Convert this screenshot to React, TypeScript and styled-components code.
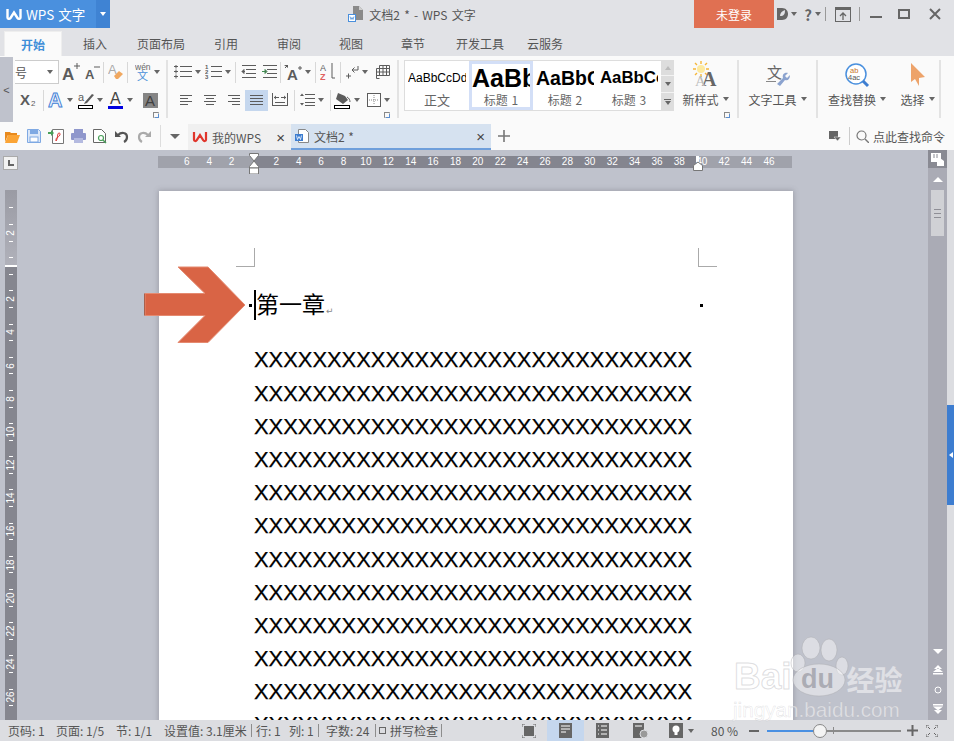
import React from 'react';
import styled, { createGlobalStyle } from 'styled-components';

const SANS = '"Noto Sans CJK SC", "Liberation Sans", sans-serif';
const LATIN = '"Liberation Sans", Arial, sans-serif';

const GlobalStyle = createGlobalStyle`
  html, body { margin: 0; padding: 0; overflow: hidden; }
  body { font-family: ${SANS}; font-size: 12px; color: #555; }
  * { box-sizing: border-box; }
  svg { display: block; flex: none; }
`;

const Shell = styled.div`
  position: relative;
  width: 954px;
  height: 741px;
  display: flex;
  flex-direction: column;
  overflow: hidden;
  background: #e1e2e6;
`;

/* title bar */
const TitleBar = styled.div`
  height: 28px;
  flex: none;
  display: flex;
  background: #e1e2e6;
`;
const Brand = styled.div`
  width: 96px;
  display: flex;
  align-items: center;
  gap: 4px;
  padding-left: 6px;
  background: #4a90de;
  color: #fff;
  font-size: 13.500px;
  word-spacing: 1px;
  white-space: nowrap;
`;
const BrandMenu = styled.div`
  width: 14px;
  display: flex;
  align-items: center;
  justify-content: center;
  background: #3f83d3;
`;
const WhiteCaret = styled.span`
  width: 0;
  height: 0;
  border-left: 3.500px solid transparent;
  border-right: 3.500px solid transparent;
  border-top: 4px solid #fff;
`;
const DocTitle = styled.div`
  flex: 1;
  display: flex;
  align-items: center;
  justify-content: center;
  gap: 6px;
  padding-left: 20px;
  color: #555;
  word-spacing: 1.500px;
`;
const Login = styled.div`
  width: 80px;
  display: flex;
  align-items: center;
  justify-content: center;
  background: #e07052;
  color: #fff;
`;
const WinSlot = styled.div<{ $w: number }>`
  width: ${({ $w }) => $w}px;
  display: flex;
  align-items: center;
  justify-content: center;
  gap: 3px;
  color: #666;
  font-size: 15px;
  font-weight: 700;
`;
const WinRule = styled.div`
  width: 1px;
  height: 14px;
  margin-top: 7px;
  background: #999;
`;

/* menu tabs */
const MenuBar = styled.div`
  height: 28px;
  flex: none;
  display: flex;
  padding-left: 4px;
  background: #e1e2e6;
`;
const MenuTab = styled.div<{ $w: number; $active?: boolean }>`
  width: ${({ $w }) => $w}px;
  display: flex;
  align-items: center;
  justify-content: center;
  color: ${({ $active }) => ($active ? '#3f8fd8' : '#555')};
  font-weight: ${({ $active }) => ($active ? 700 : 400)};
  background: ${({ $active }) => ($active ? '#fafafa' : 'transparent')};
  margin-top: ${({ $active }) => ($active ? '3px' : '0')};
  border: ${({ $active }) => ($active ? '1px solid #eee' : 'none')};
  border-bottom: none;
  padding-top: ${({ $active }) => ($active ? '0' : '3px')};
`;

/* ribbon */
const Ribbon = styled.div`
  height: 66px;
  flex: none;
  display: flex;
  background: #fafafa;
`;
const Collapse = styled.div`
  width: 13px;
  height: 65px;
  margin-top: 1px;
  display: flex;
  align-items: center;
  justify-content: center;
  background: #bfc2cc;
  color: #555;
  font-size: 11px;
  font-family: ${LATIN};
`;
const Group = styled.div<{ $w: number; $pad?: number; $rule?: boolean }>`
  position: relative;
  width: ${({ $w }) => $w}px;
  height: 58px;
  margin-top: 4px;
  padding-left: ${({ $pad }) => $pad ?? 0}px;
  display: flex;
  flex-direction: column;
  gap: 4px;
  border-right: ${({ $rule = true }) => ($rule ? '2px solid #e3e3e3' : 'none')};
`;
const Row = styled.div`
  height: 24px;
  display: flex;
  align-items: center;
`;
const Tool = styled.div<{ $w: number; $on?: boolean }>`
  width: ${({ $w }) => $w}px;
  height: ${({ $on }) => ($on ? '21px' : '24px')};
  display: flex;
  align-items: center;
  justify-content: center;
  gap: 3px;
  background: ${({ $on }) => ($on ? '#c5d7ee' : 'transparent')};
`;
const Rule = styled.div<{ $w: number }>`
  width: ${({ $w }) => $w}px;
  height: 21px;
  display: flex;
  justify-content: center;
  &::before {
    content: '';
    width: 1px;
    height: 100%;
    background: #d8d8d8;
  }
`;
const Caret = styled.span`
  flex: none;
  width: 0;
  height: 0;
  border-left: 3.500px solid transparent;
  border-right: 3.500px solid transparent;
  border-top: 4px solid #666;
`;
const SizeSelect = styled.div`
  width: 44px;
  height: 24px;
  display: flex;
  align-items: center;
  justify-content: space-between;
  padding: 0 5px 0 0;
  background: #fff;
  border: 1px solid #ccc;
  border-left: none;
  color: #555;
  font-size: 12px;
`;
const Launcher = styled.div`
  position: absolute;
  right: 7px;
  bottom: 0;
  width: 6px;
  height: 6px;
  border: 1px solid #888;
  border-right-color: #bbb;
  border-bottom-color: #bbb;
  &::after {
    content: '';
    display: block;
    width: 3px;
    height: 3px;
    margin: 1px 0 0 1px;
    border-right: 1px solid #5b8fd0;
    border-bottom: 1px solid #5b8fd0;
  }
`;
const Gallery = styled.div`
  display: flex;
  height: 51px;
  margin: 4px 0 0 5px;
  background: #fff;
  border: 1px solid #ddd;
  border-right: none;
`;
const StyleCard = styled.div<{ $on?: boolean }>`
  width: 64px;
  height: 49px;
  display: flex;
  flex-direction: column;
  align-items: center;
  border: 3px solid ${({ $on }) => ($on ? '#d3dff7' : 'transparent')};
`;
const Sample = styled.div<{ $size: number; $bold?: boolean }>`
  width: 58px;
  height: 29px;
  overflow: hidden;
  display: flex;
  align-items: center;
  white-space: nowrap;
  color: #000;
  font-family: ${LATIN};
  font-size: ${({ $size }) => $size}px;
  font-weight: ${({ $bold }) => ($bold ? 700 : 400)};
`;
const SampleLabel = styled.div<{ $big?: boolean }>`
  color: #666;
  font-size: ${({ $big }) => ($big ? 13 : 12)}px;
  line-height: 15px;
  word-spacing: 1px;
`;
const GalleryScroll = styled.div`
  width: 13px;
  height: 51px;
  margin-top: 4px;
  display: grid;
  grid-template-rows: 16px 17px 18px;
  background: #ddd;
`;
const ScrollCell = styled.div<{ $dim?: boolean }>`
  display: flex;
  flex-direction: column;
  align-items: center;
  justify-content: center;
  gap: 1px;
  border-bottom: 1px solid #f3f3f3;
  &::before {
    content: '';
    width: 0;
    height: 0;
    border-left: 3.500px solid transparent;
    border-right: 3.500px solid transparent;
    border-top: 4px solid ${({ $dim }) => ($dim ? '#bbb' : '#666')};
  }
`;
const UpCell = styled(ScrollCell)`
  &::before {
    border-top: none;
    border-bottom: 4px solid #bbb;
  }
`;
const BarCell = styled(ScrollCell)`
  border-bottom: none;
  &::after {
    content: '';
    order: -1;
    width: 7px;
    height: 1px;
    background: #666;
  }
`;
const LargeGroup = styled.div<{ $w: number; $rule?: boolean }>`
  position: relative;
  width: ${({ $w }) => $w}px;
  height: 58px;
  margin-top: 4px;
  display: flex;
  border-right: ${({ $rule = true }) => ($rule ? '2px solid #e3e3e3' : 'none')};
`;
const LargeTool = styled.div<{ $w?: number }>`
  width: ${({ $w }) => ($w ? `${$w}px` : '100%')};
  display: flex;
  flex-direction: column;
  align-items: center;
`;
const LargeIcon = styled.div`
  height: 30px;
  display: flex;
  align-items: center;
  justify-content: center;
`;
const LargeLabel = styled.div`
  display: flex;
  align-items: center;
  gap: 4px;
  height: 18px;
  color: #555;
`;

/* quick access + document tabs */
const QuickBar = styled.div`
  height: 28px;
  flex: none;
  display: flex;
  align-items: flex-end;
  padding-left: 1px;
  background: #fafafa;
`;
const QuickTool = styled.div`
  width: 22px;
  height: 28px;
  display: flex;
  align-items: center;
  justify-content: center;
`;
const QuickRule = styled.div`
  width: 1px;
  height: 22px;
  margin: 0 0 3px 5px;
  background: #ddd;
`;
const QuickCaret = styled.div`
  width: 27px;
  height: 28px;
  display: flex;
  align-items: center;
  justify-content: center;
  &::before {
    content: '';
    border-left: 5px solid transparent;
    border-right: 5px solid transparent;
    border-top: 5px solid #666;
  }
`;
const DocTab = styled.div<{ $w: number; $on?: boolean }>`
  width: ${({ $w }) => $w}px;
  height: 26px;
  display: flex;
  align-items: center;
  gap: ${({ $on }) => ($on ? 5 : 4)}px;
  padding: 0 6px 0 4px;
  background: ${({ $on }) => ($on ? '#d6e2f0' : '#f0f0f0')};
  border-bottom: ${({ $on }) => ($on ? '2px solid #6f9fdb' : 'none')};
  color: #555;
  word-spacing: 1px;
`;
const TabClose = styled.span`
  margin-left: auto;
  font-family: ${LATIN};
  font-size: 15px;
  line-height: 1;
  color: #444;
`;
const AddTab = styled.div`
  width: 26px;
  height: 28px;
  display: flex;
  align-items: center;
  justify-content: center;
`;
const CommandBox = styled.div`
  margin-left: auto;
  height: 28px;
  display: flex;
  align-items: center;
  gap: 4px;
  padding-right: 9px;
  color: #555;
`;
const CommandRule = styled.div`
  width: 1px;
  height: 18px;
  margin: 0 2px 0 4px;
  background: #ccc;
`;

/* workspace */
const Workspace = styled.div`
  height: 570px;
  flex: none;
  display: flex;
  overflow: hidden;
  background: #bfc2cc;
`;
const Canvas = styled.div`
  width: 928px;
  display: flex;
  flex-direction: column;
`;
const RulerRow = styled.div`
  height: 40px;
  flex: none;
  display: flex;
  align-items: flex-start;
  padding: 6px 0 0 3px;
`;
const TabStop = styled.div`
  width: 15px;
  height: 14px;
  display: flex;
  align-items: flex-end;
  justify-content: center;
  padding-bottom: 3px;
  background: #f2f2f2;
  border: 1px solid #aaa;
  &::before {
    content: '';
    width: 4px;
    height: 4px;
    border-left: 2px solid #666;
    border-bottom: 2px solid #666;
  }
`;
const HRuler = styled.div`
  position: relative;
  width: 634px;
  height: 12px;
  margin-left: 140px;
  padding-left: 17.600px;
  display: flex;
  background: linear-gradient(90deg, #a0a2ab 96px, #84858f 96px, #84858f 539px, #a0a2ab 539px);
`;
const HTick = styled.span`
  width: 22.400px;
  flex: none;
  text-align: center;
  color: #fff;
  font-family: ${LATIN};
  font-size: 10px;
  line-height: 12px;
`;
const RulerMark = styled.div<{ $x: number }>`
  position: absolute;
  top: -3px;
  left: ${({ $x }) => $x}px;
`;
const SheetRow = styled.div`
  flex: none;
  display: flex;
  padding-left: 5px;
`;
const VRuler = styled.div`
  position: relative;
  width: 12px;
  height: 530px;
  flex: none;
  padding-top: 13.750px;
  display: flex;
  flex-direction: column;
  align-items: center;
  overflow: hidden;
  background: linear-gradient(180deg, #9a9ba4 0, #b0b1ba 75px, #fff 75px, #fff 77px, #85868f 77px);
`;
const VCell = styled.div`
  height: 8.300px;
  flex: none;
  width: 100%;
  display: flex;
  align-items: center;
  justify-content: center;
  color: #fff;
  font-family: ${LATIN};
  font-size: 10px;
`;
const VNum = styled.span`
  transform: rotate(-90deg);
  white-space: nowrap;
  line-height: 8px;
`;
const VDash = styled.span`
  width: 4px;
  height: 1px;
  background: #fff;
`;
const Page = styled.div`
  position: relative;
  width: 634px;
  height: 560px;
  flex: none;
  margin: 1px 0 0 142px;
  background: #fff;
  box-shadow: 0 0 5px 1px rgba(90, 90, 100, 0.3);
  color: #000;
`;
const CropRow = styled.div`
  display: flex;
  justify-content: space-between;
  padding: 57px 76px 0 77px;
`;
const Crop = styled.div<{ $side: 'left' | 'right' }>`
  width: 19px;
  height: 19px;
  border-bottom: 1px solid #aaa;
  ${({ $side }) => ($side === 'left' ? 'border-right' : 'border-left')}: 1px solid #aaa;
`;
const ArrowShape = styled.svg`
  position: absolute;
  left: -15px;
  top: 75px;
`;
const HeadingLine = styled.div`
  height: 76.400px;
  display: flex;
  align-items: center;
  padding-left: 90px;
`;
const ParaDot = styled.span`
  width: 3px;
  height: 3px;
  flex: none;
  background: #000;
`;
const Cursor = styled.span`
  width: 2px;
  height: 30px;
  flex: none;
  margin-left: 2px;
  background: #000;
`;
const Heading = styled.span`
  margin: -4px 0 0 0;
  font-size: 23px;
  line-height: 30px;
  font-weight: 400;
`;
const ReturnMark = styled.span`
  margin: 12px 0 0 1px;
  color: #888;
  font-size: 9px;
  font-family: "DejaVu Sans", sans-serif;
`;
const EndDot = styled(ParaDot)`
  margin-left: auto;
  margin-right: 90px;
`;
const BodyLine = styled.div`
  height: 33.200px;
  padding-left: 95px;
  font-family: ${LATIN};
  font-size: 21.900px;
  line-height: 33.200px;
  white-space: nowrap;
  -webkit-text-stroke: 0.250px #000;
`;
const VScroll = styled.div`
  width: 19px;
  flex: none;
  display: flex;
  flex-direction: column;
  align-items: center;
  background: #aaabb5;
`;
const ScrollTop = styled.div`
  width: 100%;
  height: 18px;
  display: flex;
  align-items: center;
  justify-content: center;
  background: #898a93;
`;
const ScrollArrow = styled.div`
  height: 22px;
  display: flex;
  align-items: center;
  &::before {
    content: '';
    border-left: 5px solid transparent;
    border-right: 5px solid transparent;
    border-bottom: 5px solid #fff;
  }
`;
const Thumb = styled.div`
  width: 13px;
  height: 46px;
  display: flex;
  flex-direction: column;
  align-items: center;
  justify-content: center;
  gap: 3px;
  background: #d0d1d5;
  &::before, &::after, & > i {
    content: '';
    display: block;
    width: 7px;
    height: 1px;
    background: #8f8f96;
  }
`;
const ScrollFoot = styled.div`
  margin-top: auto;
  height: 71px;
  display: flex;
  flex-direction: column;
  align-items: center;
  justify-content: space-between;
  padding-bottom: 6px;
`;
const SideStrip = styled.div`
  width: 7px;
  flex: none;
  display: flex;
  flex-direction: column;
  background: #dcdde1;
`;
const SidePull = styled.div`
  height: 100px;
  margin-top: 255px;
  display: flex;
  align-items: center;
  justify-content: flex-end;
  background: #3d7dd0;
  padding-right: 1px;
  &::before {
    content: '';
    border-top: 3.500px solid transparent;
    border-bottom: 3.500px solid transparent;
    border-right: 4px solid #fff;
  }
`;

/* status bar */
const StatusBar = styled.div`
  height: 21px;
  flex: none;
  display: flex;
  align-items: center;
  padding: 0 14px 0 8px;
  background: #dcdde1;
  color: #555;
  white-space: nowrap;
`;
const StatusItem = styled.span<{ $w?: number; $ml?: number }>`
  width: ${({ $w }) => ($w ? `${$w}px` : 'auto')};
  margin-left: ${({ $ml }) => $ml ?? 0}px;
`;
const StatusRule = styled.span`
  width: 1px;
  height: 13px;
  background: #8d8d8d;
`;
const SpellBox = styled.span`
  width: 7px;
  height: 7px;
  margin: 0 4px 0 3px;
  border: 1px solid #666;
`;
const ViewGroup = styled.div`
  margin-left: auto;
  display: flex;
  align-items: center;
  height: 21px;
`;
const ViewSlot = styled.div<{ $w: number; $on?: boolean }>`
  width: ${({ $w }) => $w}px;
  height: 21px;
  display: flex;
  align-items: center;
  justify-content: center;
  gap: 5px;
  background: ${({ $on }) => ($on ? '#c5d7ee' : 'transparent')};
`;
const ZoomTrack = styled.div`
  position: relative;
  width: 134px;
  height: 2px;
  margin-left: 4px;
  background: #8a8a8a;
`;
const ZoomFill = styled.div`
  width: 53px;
  height: 2px;
  background: #4a90e2;
`;
const ZoomKnob = styled.div`
  position: absolute;
  left: 46px;
  top: -6px;
  width: 14px;
  height: 14px;
  border-radius: 50%;
  background: #f4f4f4;
  border: 1px solid #888;
`;
const ZoomTick = styled.div`
  position: absolute;
  left: 66px;
  top: -3px;
  width: 1px;
  height: 7px;
  background: #8a8a8a;
`;

/* baidu stamp over the corner */
const Stamp = styled.div`
  position: absolute;
  left: 733px;
  top: 636px;
  width: 172px;
  pointer-events: none;
`;
const StampTop = styled.div`
  display: flex;
  align-items: flex-start;
  height: 62px;
`;
const StampBai = styled.span`
  margin: 21px 0 0 1px;
  font-family: ${LATIN};
  font-weight: 700;
  font-size: 37px;
  line-height: 40px;
  color: rgba(255, 255, 255, 0.45);
  -webkit-text-stroke: 1px rgba(170, 170, 175, 0.4);
`;
const StampPaw = styled.svg`
  margin-left: -5px;
`;
const StampCn = styled.span`
  margin: 26px 0 0 -2px;
  font-size: 28px;
  line-height: 34px;
  font-weight: 700;
  white-space: nowrap;
  color: rgba(255, 255, 255, 0.5);
`;
const StampUrl = styled.div`
  font-family: ${LATIN};
  font-size: 20.700px;
  line-height: 24px;
  white-space: nowrap;
  color: rgba(255, 255, 255, 0.5);
  -webkit-text-stroke: 0.500px rgba(170, 170, 175, 0.35);
`;

const INK = '#5c5c5c';

type SvgProps = { w: number; h: number; children: React.ReactNode };
const Ico = ({ w, h, children }: SvgProps) => (
  <svg width={w} height={h} viewBox={`0 0 ${w} ${h}`}>{children}</svg>
);

const Lines = ({ rows, w = 14 }: { rows: [number, number, number][]; w?: number }) => (
  <Ico w={w} h={14}>
    {rows.map(([x, y, len], i) => (
      <rect key={i} x={x} y={y} width={len} height={1} fill={INK} />
    ))}
  </Ico>
);

const WpsMark = ({ color = '#fff', w = 16, h = 13 }: { color?: string; w?: number; h?: number }) => (
  <svg width={w} height={h} viewBox="0 0 16 13">
    <path d="M1.500 1v8.500c0 1.500 2 2 3 .5L8 4.500l3.500 5.500c1 1.500 3 1 3-.5V1" fill="none" stroke={color} strokeWidth="2.400" />
  </svg>
);

const DocBadge = () => (
  <Ico w={15} h={16}>
    <path d="M5 0h6l4 4v10H5z" fill="#8a8a8a" />
    <path d="M11 0l4 4h-4z" fill="#cfcfcf" />
    <rect x="0.500" y="8.500" width="7" height="7" fill="#fff" stroke="#4a8fdc" />
    <path d="M2 10.500l1 3 1-2 1 2 1-3" fill="none" stroke="#4a8fdc" strokeWidth="0.800" />
  </Ico>
);

const LetterA = ({ size, x = 0, y, fill = INK, bold = true }: { size: number; x?: number; y: number; fill?: string; bold?: boolean }) => (
  <text x={x} y={y} fontFamily={LATIN} fontSize={size} fontWeight={bold ? 700 : 400} fill={fill}>A</text>
);

const FontGrow = () => (
  <Ico w={18} h={20}>
    <LetterA size={17} y={18} />
    <path d="M12 4h6M15 1v6" stroke={INK} />
  </Ico>
);
const FontShrink = () => (
  <Ico w={15} h={20}>
    <LetterA size={13} y={17} />
    <path d="M9 5h6" stroke={INK} />
  </Ico>
);
const ClearFormat = () => (
  <Ico w={16} h={18}>
    <LetterA size={13} y={11} fill="#aaa" bold={false} />
    <path d="M6 13l5-5 4 3-5 5h-2z" fill="#f0a860" />
  </Ico>
);
const Wen = () => (
  <Ico w={16} h={18}>
    <text x="0" y="7" fontFamily={LATIN} fontSize="8.500" fill="#666">wén</text>
    <text x="2" y="17" fontFamily={SANS} fontSize="11" fill="#4a8fd8">文</text>
  </Ico>
);
const Subscript = () => (
  <Ico w={17} h={16}>
    <text x="0" y="13" fontFamily={LATIN} fontSize="15" fontWeight="700" fill={INK}>X</text>
    <text x="11" y="14" fontFamily={LATIN} fontSize="8" fill={INK}>2</text>
  </Ico>
);
const OutlineA = () => (
  <Ico w={16} h={17}>
    <text x="0" y="15" fontFamily={LATIN} fontSize="20" fontWeight="700" fill="#eaf1fb" stroke="#3f7fd6" strokeWidth="0.900" textLength="16">A</text>
  </Ico>
);
const Highlight = () => (
  <Ico w={16} h={18}>
    <text x="0" y="10" fontFamily={LATIN} fontSize="11" fill={INK}>a</text>
    <path d="M7 11l7-8 2 1-7 8-3 1z" fill={INK} />
    <rect x="0.500" y="14.500" width="14" height="3" fill="#fff" stroke="#000" />
  </Ico>
);
const FontColor = () => (
  <Ico w={16} h={18}>
    <text x="2" y="13" fontFamily={LATIN} fontSize="16" fill="#444">A</text>
    <rect x="0" y="15" width="15" height="3" fill="#0000e0" />
  </Ico>
);
const ShadedA = () => (
  <Ico w={15} h={15}>
    <rect width="15" height="15" fill="#858585" />
    <text x="2" y="13" fontFamily={LATIN} fontSize="15" fill="#3f3f3f">A</text>
  </Ico>
);
const Bullets = () => (
  <Ico w={18} h={14}>
    {[1, 6, 11].map(y => (
      <g key={y}>
        <path d={`M0 ${y + 0.500}h4M2 ${y - 1.500}v4`} stroke={INK} />
        <rect x="6" y={y} width="12" height="1" fill={INK} />
      </g>
    ))}
  </Ico>
);
const Numbers = () => (
  <Ico w={17} h={16}>
    {[1, 6, 11].map((y, i) => (
      <g key={y}>
        <text x="0" y={y + 4} fontFamily={LATIN} fontSize="6" fontWeight="700" fill={INK}>{i + 1}</text>
        <rect x="6" y={y + 1} width="11" height="1" fill={INK} />
      </g>
    ))}
  </Ico>
);
const Indent = ({ flip }: { flip?: boolean }) => (
  <Ico w={15} h={14}>
    <path d="M1 0.500h14M5 4.500h10M5 8.500h10M1 12.500h14" stroke={INK} fill="none" />
    <path d={flip ? 'M0 6.500h3M3 4.500v4l2-2z' : 'M1 6.500h3M3 4.500v4l-2-2z'} stroke={flip ? '#3f8f50' : INK} fill={INK} />
  </Ico>
);
const SpacingA = () => (
  <Ico w={18} h={17}>
    <text x="3" y="16" fontFamily={LATIN} fontSize="15" fontWeight="700" fill={INK}>A</text>
    <path d="M1 4l3-3M14 4h4M16 2v4" stroke={INK} fill="none" />
    <path d="M0 1h4v3z" fill={INK} />
  </Ico>
);
const SortAz = () => (
  <Ico w={16} h={18}>
    <text x="0" y="8" fontFamily={LATIN} fontSize="9" fill={INK}>A</text>
    <text x="0" y="17" fontFamily={LATIN} fontSize="9" fontWeight="700" fill="#e06060">Z</text>
    <path d="M12 0v15" stroke={INK} />
    <path d="M12 15h3" stroke={INK} />
  </Ico>
);
const ReturnTool = () => (
  <Ico w={13} h={15}>
    <path d="M12 1v4H6M6 5l2.500-2.500M6 5l2.500 2.500" stroke={INK} fill="none" />
    <path d="M0 11h5M2.500 8.500v5" stroke={INK} />
  </Ico>
);
const TableGrid = () => (
  <Ico w={14} h={14}>
    <path d="M3.500 0.500h10v10M0.500 3.500h13M0.500 7h13M3.500 0.500v10M7 0.500v10M10.500 0.500v10M0.500 10.500h13M0.500 3.500v10h3" fill="none" stroke={INK} />
  </Ico>
);
const Distributed = () => (
  <Ico w={16} h={14}>
    <path d="M0.500 0v13M15.500 0v13M0 12.500h16M3 9.500h10" stroke={INK} fill="none" />
    <path d="M2 4.500h5M9 4.500h5" stroke={INK} />
    <path d="M2 4.500l2-2v4zM14 4.500l-2-2v4z" fill={INK} />
  </Ico>
);
const LineSpace = () => (
  <Ico w={15} h={14}>
    <path d="M5 1.500h10M5 5.500h10M5 9.500h10M5 12.500h10" stroke={INK} />
    <path d="M0 3h4L2 0.500zM0 10h4l-2 2.500z" fill={INK} />
  </Ico>
);
const Bucket = () => (
  <Ico w={17} h={18}>
    <path d="M4 2l7 3 3 4-5 4-7-5z" fill={INK} />
    <path d="M13 6c2 1 3 3 3 5" stroke={INK} fill="none" />
    <rect x="0.500" y="14.500" width="15" height="3" fill="#fff" stroke="#000" />
  </Ico>
);
const BorderBox = () => (
  <Ico w={14} h={14}>
    <rect x="0.500" y="0.500" width="13" height="13" fill="#fff" stroke={INK} />
    <path d="M7 2v10M2 7h10" stroke="#888" strokeDasharray="1 1" />
  </Ico>
);
const NewStyle = () => (
  <Ico w={26} h={28}>
    <circle cx="8" cy="8" r="4" fill="#fdeaa0" />
    <path d="M8 0v3M8 13v3M0 8h3M13 8h3M2 2l2 2M12 12l2 2M14 2l-2 2M2 14l2-2" stroke="#f5b73a" strokeWidth="1.400" />
    <text x="9" y="25" fontFamily='"Liberation Serif", serif' fontSize="20" fontWeight="700" fill="#666">A</text>
    <text x="2" y="25" fontFamily='"Liberation Serif", serif' fontSize="15" fill="#bbb">A</text>
  </Ico>
);
const TextTools = () => (
  <Ico w={24} h={24}>
    <text x="1" y="15" fontFamily={SANS} fontSize="15" fill="#666">文</text>
    <path d="M0 18.500h10" stroke="#888" />
    <path d="M11 21l6-6c-1-3 1-6 5-5l-3 3 2 2 3-3c0 4-2 6-5 5l-5 6z" fill="#8ba3cf" />
  </Ico>
);
const FindReplace = () => (
  <Ico w={25} h={25}>
    <circle cx="11" cy="11" r="10" fill="#fff" stroke="#4a90de" strokeWidth="1.500" />
    <text x="5" y="10" fontFamily={LATIN} fontSize="7.500" fill="#c8752a">ab</text>
    <text x="3" y="17" fontFamily={LATIN} fontSize="7.500" fill="#555">4ac</text>
    <path d="M18 18l5 5" stroke="#3d7dd0" strokeWidth="3" />
  </Ico>
);
const Pointer = () => (
  <Ico w={15} h={24}>
    <path d="M1 0l14 14-6 1 0 8-4-7-4 3z" fill="#eda36a" />
  </Ico>
);
const Folder = () => (
  <Ico w={15} h={13}>
    <path d="M0 2h5l1 1h6v2H3L0 12z" fill="#e8891c" />
    <path d="M3 5h12l-3 8H0z" fill="#fba435" />
  </Ico>
);
const Floppy = () => (
  <Ico w={14} h={14}>
    <path d="M0.500 0.500h11l2 2v11h-13z" fill="#dbe7f8" stroke="#7fa9e3" />
    <rect x="3" y="1" width="8" height="4" fill="#7fa9e3" />
    <rect x="3" y="8" width="8" height="5" fill="#fff" stroke="#7fa9e3" />
  </Ico>
);
const ExportPdf = () => (
  <Ico w={16} h={15}>
    <path d="M4.500 0.500h11v14h-11z" fill="#fff" stroke="#777" />
    <path d="M8 12c2-2 1-8 3-8s1 3-1 4-2 2-2 4z" fill="none" stroke="#d33" />
    <path d="M0 3h3V1l3 3-3 3V5H0z" fill="#4aa05a" />
  </Ico>
);
const Printer = () => (
  <Ico w={15} h={14}>
    <rect x="3" y="0" width="9" height="4" fill="#8f97cc" />
    <rect x="0" y="4" width="15" height="7" rx="1" fill="#8f97cc" />
    <rect x="3" y="9" width="9" height="5" fill="#b4bae0" />
  </Ico>
);
const Preview = () => (
  <Ico w={14} h={15}>
    <path d="M0.500 0.500h8l4 4v9h-12z" fill="#fff" stroke="#666" />
    <circle cx="8" cy="9" r="2.500" fill="none" stroke="#4aa05a" strokeWidth="1.200" />
    <path d="M10 11l3 3" stroke="#4aa05a" strokeWidth="1.500" />
  </Ico>
);
const Undo = () => (
  <Ico w={14} h={14}>
    <path d="M3 6c3-3 9-3 9 2 0 2-1 4-3 5" fill="none" stroke="#555" strokeWidth="2.200" />
    <path d="M0 2l6 6H0z" fill="#555" />
  </Ico>
);
const Redo = () => (
  <Ico w={14} h={14}>
    <path d="M11 6c-3-3-9-3-9 2 0 2 1 4 3 5" fill="none" stroke="#aaa" strokeWidth="2.200" />
    <path d="M14 2l-6 6h6z" fill="#aaa" />
  </Ico>
);
const DocTabIcon = () => (
  <Ico w={14} h={14}>
    <path d="M3.500 0.500h7l3 3v10h-10z" fill="#fff" stroke="#888" />
    <rect x="0" y="5" width="8" height="7" fill="#3d7dd0" />
    <path d="M1.500 6.500l1 4 1.500-3 1.500 3 1-4" fill="none" stroke="#fff" strokeWidth="0.800" />
  </Ico>
);
const Plus = () => (
  <Ico w={12} h={12}>
    <path d="M0 6h12M6 0v12" stroke="#777" strokeWidth="1.600" />
  </Ico>
);
const FilterTag = () => (
  <Ico w={12} h={11}>
    <rect width="9" height="8" fill="#666" />
    <path d="M5 6h7l-3.500 4z" fill="#666" stroke="#fafafa" strokeWidth="0.500" />
  </Ico>
);
const Lens = () => (
  <Ico w={13} h={13}>
    <circle cx="5.500" cy="5.500" r="4.500" fill="none" stroke="#777" strokeWidth="1.200" />
    <path d="M9 9l4 4" stroke="#777" strokeWidth="1.400" />
  </Ico>
);
const LeafD = () => (
  <Ico w={11} h={12}>
    <path d="M0 0h5c8 0 8 12 0 12H0z" fill="#666" />
    <path d="M3 8c0-3 2-5 5-6 0 4-1 6-5 6z" fill="#e1e2e6" />
  </Ico>
);
const UploadBox = () => (
  <Ico w={16} h={15}>
    <rect x="0.500" y="0.500" width="15" height="14" fill="none" stroke="#666" />
    <rect x="0" y="0" width="16" height="3" fill="#666" />
    <path d="M8 13V6M5 9l3-3 3 3" fill="none" stroke="#666" strokeWidth="1.300" />
  </Ico>
);
const WinMin = () => (
  <Ico w={12} h={12}>
    <rect y="8" width="12" height="2" fill="#666" />
  </Ico>
);
const WinMax = () => (
  <Ico w={12} h={10}>
    <rect x="1" y="1" width="10" height="8" fill="none" stroke="#666" strokeWidth="2" />
  </Ico>
);
const WinClose = () => (
  <Ico w={12} h={12}>
    <path d="M1 1l10 10M11 1L1 11" stroke="#666" strokeWidth="2" />
  </Ico>
);
const RevisionMark = () => (
  <Ico w={14} h={13}>
    <rect x="0" y="0" width="10" height="9" fill="#fff" />
    <path d="M3 1v4M6 1v4" stroke="#898a93" />
    <path d="M6 13V8l3-3 4 3v5z" fill="#fff" />
  </Ico>
);
const Frame = () => (
  <Ico w={14} h={14}>
    <rect x="2" y="2" width="10" height="10" fill="#666" />
    <path d="M0 3V0h3M11 0h3v3M14 11v3h-3M3 14H0v-3" fill="none" stroke="#666" />
  </Ico>
);
const PageView = () => (
  <Ico w={13} h={15}>
    <rect width="13" height="15" fill="#666" />
    <path d="M2 3h9M2 6h9M2 9h5" stroke="#fff" />
  </Ico>
);
const OutlineView = () => (
  <Ico w={13} h={15}>
    <rect width="13" height="15" fill="#666" />
    <path d="M2 3h1M5 3h6M2 7h1M5 7h6M2 11h1M5 11h6" stroke="#fff" />
  </Ico>
);
const WebView = () => (
  <Ico w={15} h={15}>
    <rect width="11" height="15" fill="#666" />
    <path d="M2 3h7" stroke="#fff" />
    <circle cx="11" cy="11" r="4" fill="#999" stroke="#dcdde1" />
  </Ico>
);
const BulbView = () => (
  <Ico w={14} h={15}>
    <rect width="14" height="15" fill="#666" />
    <circle cx="7" cy="6" r="3.500" fill="#fff" />
    <rect x="5.500" y="9" width="3" height="3" fill="#fff" />
  </Ico>
);
const Expand = () => (
  <Ico w={12} h={12}>
    <path d="M0 3V0h3M9 0h3v3M12 9v3H9M3 12H0V9" fill="none" stroke="#666" />
    <path d="M4 4L2 2M8 4l2-2M8 8l2 2M4 8l-2 2" stroke="#666" />
  </Ico>
);
const StepUp = () => (
  <Ico w={10} h={10}>
    <path d="M1 4l4-4 4 4zM0 7h10l-5-4z" fill="#fff" />
    <rect y="8" width="10" height="1.500" fill="#fff" />
  </Ico>
);
const StepDown = () => (
  <Ico w={10} h={10}>
    <rect y="0" width="10" height="1.500" fill="#fff" />
    <path d="M0 2.500h10l-5 4zM1 6l4 4 4-4z" fill="#fff" />
  </Ico>
);
const Dot = () => (
  <Ico w={8} h={8}>
    <circle cx="4" cy="4" r="3" fill="none" stroke="#fff" />
  </Ico>
);
const DownFilled = () => (
  <Ico w={10} h={6}>
    <path d="M0 0h10L5 5z" fill="#fff" />
  </Ico>
);

const H_NUMBERS = [6, 4, 2, null, 2, 4, 6, 8, 10, 12, 14, 16, 18, 20, 22, 24, 26, 28, 30, 32, 34, 36, 38, 40, 42, 44, 46];
const V_CELLS = Array.from({ length: 62 }, (_, i) => i - 7);
const BODY_LINES = Array.from({ length: 12 }, (_, i) => i);
const MENU: [string, number][] = [
  ['插入', 66], ['页面布局', 66], ['引用', 64], ['审阅', 62], ['视图', 62], ['章节', 62], ['开发工具', 72], ['云服务', 58],
];
const STYLES = [
  { label: '标题 1', size: 25, on: true },
  { label: '标题 2', size: 19.500 },
  { label: '标题 3', size: 16.800 },
];

const App: React.FC = () => {
  return (
    <Shell>
      <GlobalStyle />
      <TitleBar>
        <Brand>
          <WpsMark />
          WPS 文字
        </Brand>
        <BrandMenu><WhiteCaret /></BrandMenu>
        <DocTitle>
          <DocBadge />
          文档2 * - WPS 文字
        </DocTitle>
        <Login>未登录</Login>
        <WinSlot $w={26}><LeafD /><Caret /></WinSlot>
        <WinSlot $w={25}>?<Caret /></WinSlot>
        <WinRule />
        <WinSlot $w={33}><UploadBox /></WinSlot>
        <WinRule />
        <WinSlot $w={32}><WinMin /></WinSlot>
        <WinSlot $w={24}><WinMax /></WinSlot>
        <WinSlot $w={38}><WinClose /></WinSlot>
      </TitleBar>

      <MenuBar>
        <MenuTab $w={58} $active>开始</MenuTab>
        {MENU.map(([name, w]) => (
          <MenuTab key={name} $w={w}>{name}</MenuTab>
        ))}
      </MenuBar>

      <Ribbon>
        <Collapse>&lt;</Collapse>
        <Group $w={155} $pad={2}>
          <Row>
            <SizeSelect>号<Caret /></SizeSelect>
            <Tool $w={24}><FontGrow /></Tool>
            <Tool $w={19}><FontShrink /></Tool>
            <Rule $w={3} />
            <Tool $w={21}><ClearFormat /></Tool>
            <Rule $w={3} />
            <Tool $w={36}><Wen /><Caret /></Tool>
          </Row>
          <Row>
            <Tool $w={26}><Subscript /></Tool>
            <Rule $w={5} />
            <Tool $w={29}><OutlineA /><Caret /></Tool>
            <Tool $w={30}><Highlight /><Caret /></Tool>
            <Tool $w={30}><FontColor /><Caret /></Tool>
            <Tool $w={30}><ShadedA /></Tool>
          </Row>
          <Launcher />
        </Group>
        <Group $w={231} $pad={5}>
          <Row>
            <Tool $w={29}><Bullets /><Caret /></Tool>
            <Tool $w={32}><Numbers /><Caret /></Tool>
            <Rule $w={3} />
            <Tool $w={22}><Indent /></Tool>
            <Tool $w={20}><Indent flip /></Tool>
            <Rule $w={3} />
            <Tool $w={31}><SpacingA /><Caret /></Tool>
            <Rule $w={4} />
            <Tool $w={22}><SortAz /></Tool>
            <Rule $w={3} />
            <Tool $w={30}><ReturnTool /><Caret /></Tool>
            <Tool $w={22}><TableGrid /></Tool>
          </Row>
          <Row>
            <Tool $w={25}><Lines rows={[[1, 2, 12], [1, 5, 8], [1, 8, 12], [1, 11, 8]]} /></Tool>
            <Tool $w={24}><Lines rows={[[1, 2, 12], [3, 5, 8], [1, 8, 12], [3, 11, 8]]} /></Tool>
            <Tool $w={23}><Lines rows={[[1, 2, 12], [5, 5, 8], [1, 8, 12], [5, 11, 8]]} /></Tool>
            <Tool $w={23} $on><Lines rows={[[1, 2, 13], [1, 5, 13], [1, 8, 13], [1, 11, 13]]} w={15} /></Tool>
            <Tool $w={24}><Distributed /></Tool>
            <Rule $w={4} />
            <Tool $w={32}><LineSpace /><Caret /></Tool>
            <Rule $w={4} />
            <Tool $w={30}><Bucket /><Caret /></Tool>
            <Tool $w={32}><BorderBox /><Caret /></Tool>
          </Row>
          <Launcher />
        </Group>
        <Gallery>
          <StyleCard>
            <Sample $size={12}>AaBbCcDd</Sample>
            <SampleLabel $big>正文</SampleLabel>
          </StyleCard>
          {STYLES.map(item => (
            <StyleCard key={item.label} $on={item.on}>
              <Sample $size={item.size} $bold>AaBbCcDd</Sample>
              <SampleLabel>{item.label}</SampleLabel>
            </StyleCard>
          ))}
        </Gallery>
        <GalleryScroll>
          <UpCell />
          <ScrollCell />
          <BarCell />
        </GalleryScroll>
        <LargeGroup $w={65}>
          <LargeTool>
            <LargeIcon><NewStyle /></LargeIcon>
            <LargeLabel>新样式<Caret /></LargeLabel>
          </LargeTool>
          <Launcher />
        </LargeGroup>
        <LargeGroup $w={79}>
          <LargeTool>
            <LargeIcon><TextTools /></LargeIcon>
            <LargeLabel>文字工具<Caret /></LargeLabel>
          </LargeTool>
        </LargeGroup>
        <LargeGroup $w={123}>
          <LargeTool $w={78}>
            <LargeIcon><FindReplace /></LargeIcon>
            <LargeLabel>查找替换<Caret /></LargeLabel>
          </LargeTool>
          <LargeTool $w={43}>
            <LargeIcon><Pointer /></LargeIcon>
            <LargeLabel>选择<Caret /></LargeLabel>
          </LargeTool>
        </LargeGroup>
      </Ribbon>

      <QuickBar>
        <QuickTool><Folder /></QuickTool>
        <QuickTool><Floppy /></QuickTool>
        <QuickTool><ExportPdf /></QuickTool>
        <QuickTool><Printer /></QuickTool>
        <QuickTool><Preview /></QuickTool>
        <QuickTool><Undo /></QuickTool>
        <QuickTool><Redo /></QuickTool>
        <QuickRule />
        <QuickCaret />
        <DocTab $w={103}>
          <WpsMark color="#e0352b" w={16} h={12} />
          我的WPS
          <TabClose>×</TabClose>
        </DocTab>
        <DocTab $w={200} $on>
          <DocTabIcon />
          文档2 *
          <TabClose>×</TabClose>
        </DocTab>
        <AddTab><Plus /></AddTab>
        <CommandBox>
          <FilterTag />
          <CommandRule />
          <Lens />
          点此查找命令
        </CommandBox>
      </QuickBar>

      <Workspace>
        <Canvas>
          <RulerRow>
            <TabStop />
            <HRuler>
              {H_NUMBERS.map((n, i) => (
                <HTick key={i}>{n}</HTick>
              ))}
              <RulerMark $x={91}>
                <svg width="10" height="21" viewBox="0 0 10 21">
                  <path d="M0.500 0.500h9v2L5 8l4.500 5.500v1.500h-9v-1.500L5 8 0.500 2.500z" fill="#fff" stroke="#777" />
                  <rect x="0.500" y="15" width="9" height="6" fill="#fff" stroke="#777" />
                </svg>
              </RulerMark>
              <RulerMark $x={535}>
                <svg width="10" height="18" viewBox="0 0 10 18">
                  <rect x="3" y="3" width="3" height="6" fill="#fff" />
                  <path d="M0.500 17.500v-5L5 9l4.500 3.500v5z" fill="#fff" stroke="#777" />
                </svg>
              </RulerMark>
            </HRuler>
          </RulerRow>
          <SheetRow>
            <VRuler>
              {V_CELLS.map(i => (
                <VCell key={i}>
                  {i !== 0 && i % 4 === 0 ? (
                    <VNum>{Math.abs(i / 2)}</VNum>
                  ) : i % 2 !== 0 ? (
                    <VDash />
                  ) : null}
                </VCell>
              ))}
            </VRuler>
            <Page>
              <CropRow>
                <Crop $side="left" />
                <Crop $side="right" />
              </CropRow>
              <ArrowShape width="102" height="78" viewBox="0 0 102 78">
                <path
                  d="M1 27.500h60L34 1h30l37 38-37 37.500H34L61 49.500H1z"
                  fill="#d96445"
                  stroke="#e58a70"
                />
                <path d="M0.500 27.500v22" stroke="#a9604c" />
              </ArrowShape>
              <HeadingLine>
                <ParaDot />
                <Cursor />
                <Heading>第一章</Heading>
                <ReturnMark>↵</ReturnMark>
                <EndDot />
              </HeadingLine>
              {BODY_LINES.map(i => (
                <BodyLine key={i}>XXXXXXXXXXXXXXXXXXXXXXXXXXXXXX</BodyLine>
              ))}
            </Page>
          </SheetRow>
        </Canvas>
        <VScroll>
          <ScrollTop><RevisionMark /></ScrollTop>
          <ScrollArrow />
          <Thumb><i /></Thumb>
          <ScrollFoot>
            <DownFilled />
            <StepUp />
            <Dot />
            <StepDown />
          </ScrollFoot>
        </VScroll>
        <SideStrip>
          <SidePull />
        </SideStrip>
      </Workspace>

      <StatusBar>
        <StatusItem $w={48}>页码: 1</StatusItem>
        <StatusItem $w={60}>页面: 1/5</StatusItem>
        <StatusItem $w={48}>节: 1/1</StatusItem>
        <StatusItem $w={87}>设置值: 3.1厘米</StatusItem>
        <StatusRule />
        <StatusItem $w={33} $ml={4}>行: 1</StatusItem>
        <StatusItem $w={29}>列: 1</StatusItem>
        <StatusRule />
        <StatusItem $w={49} $ml={7}>字数: 24</StatusItem>
        <StatusRule />
        <SpellBox />
        <StatusItem $w={51}>拼写检查</StatusItem>
        <StatusRule />
        <ViewGroup>
          <ViewSlot $w={37}><Frame /></ViewSlot>
          <ViewSlot $w={37} $on><PageView /></ViewSlot>
          <ViewSlot $w={37}><OutlineView /></ViewSlot>
          <ViewSlot $w={38}><WebView /></ViewSlot>
          <ViewSlot $w={45}><BulbView /><Caret /></ViewSlot>
          <ViewSlot $w={41}>80 %</ViewSlot>
          <ViewSlot $w={18}>
            <Ico w={10} h={2}><rect width="10" height="2" fill="#666" /></Ico>
          </ViewSlot>
          <ZoomTrack>
            <ZoomFill />
            <ZoomTick />
            <ZoomKnob />
          </ZoomTrack>
          <ViewSlot $w={22}>
            <Ico w={11} h={11}><path d="M0 5.500h11M5.500 0v11" stroke="#666" strokeWidth="2" /></Ico>
          </ViewSlot>
          <ViewSlot $w={17}><Expand /></ViewSlot>
        </ViewGroup>
      </StatusBar>

      <Stamp>
        <StampTop>
          <StampBai>Bai</StampBai>
          <StampPaw width="62" height="62" viewBox="0 0 62 62">
            <g fill="rgba(255,255,255,.45)" stroke="rgba(170,170,175,.45)">
              <ellipse cx="24" cy="12" rx="9" ry="11" />
              <ellipse cx="42" cy="14" rx="8" ry="11" />
              <ellipse cx="11" cy="27" rx="7" ry="9" />
              <ellipse cx="55" cy="30" rx="6" ry="9" />
              <ellipse cx="32" cy="44" rx="26" ry="16" />
            </g>
            <text x="14" y="52" fontFamily={LATIN} fontSize="27" fontWeight="700" fill="rgba(150,150,160,.7)">du</text>
          </StampPaw>
          <StampCn>经验</StampCn>
        </StampTop>
        <StampUrl>jingyan.baidu.com</StampUrl>
      </Stamp>
    </Shell>
  );
};

export default App;
